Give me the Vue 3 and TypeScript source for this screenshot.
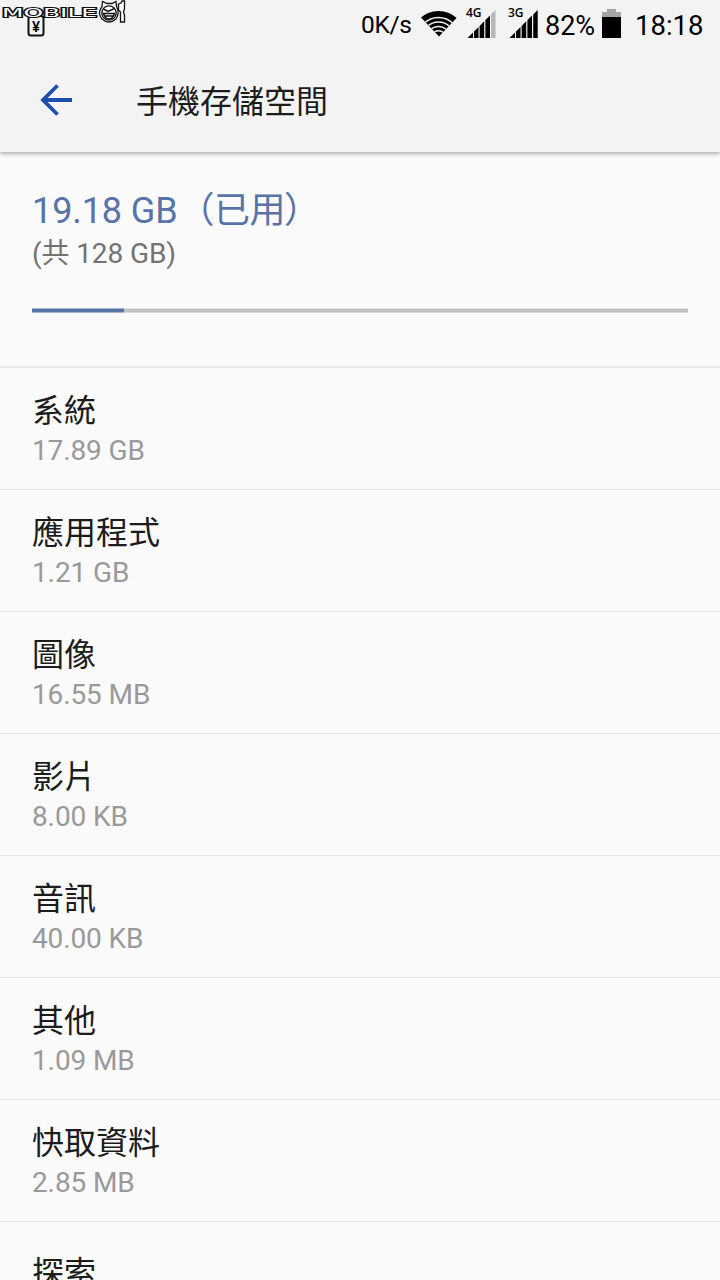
<script setup lang="ts">
interface Category {
  name: string
  size: string
}

const usedPercent = 14.02
const categories: Category[] = [
  { name: '系統', size: '17.89 GB' },
  { name: '應用程式', size: '1.21 GB' },
  { name: '圖像', size: '16.55 MB' },
  { name: '影片', size: '8.00 KB' },
  { name: '音訊', size: '40.00 KB' },
  { name: '其他', size: '1.09 MB' },
  { name: '快取資料', size: '2.85 MB' },
]
</script>

<template>
  <div class="screen">
    <header class="top">
      <div class="status">
        <svg class="note" width="20" height="24" viewBox="0 0 20 24">
          <rect x="2.5" y="2" width="15" height="19.5" rx="2.5" fill="none" stroke="#111" stroke-width="2" />
          <text x="10" y="18" text-anchor="middle" class="yen">¥</text>
        </svg>
        <span class="speed">0K/s</span>
        <svg class="wifi" width="36" height="28" viewBox="0 0 36 28">
          <defs>
            <clipPath id="wedge"><path d="M0 7.5V0H36V7.5L18 26.5Z" /></clipPath>
          </defs>
          <g clip-path="url(#wedge)">
            <circle cx="17.5" cy="28" r="27" fill="#000" />
            <g fill="none" stroke="#f3f3f3" stroke-width="1.4">
              <circle cx="17.5" cy="28" r="20.5" />
              <circle cx="17.5" cy="28" r="16" />
              <circle cx="17.5" cy="28" r="11.5" />
              <circle cx="17.5" cy="28" r="7.3" />
            </g>
          </g>
        </svg>
        <div class="signal first">
          <span class="gen">4G</span>
          <svg width="30" height="29" viewBox="0 0 30 29">
            <path d="M0.5 28L6 22.5V28ZM7 28V21.5L11.5 17V28ZM12.6 28V15.9L17.2 11.3V28ZM18.4 28V10.1L23 5.5V28Z" fill="#000" />
            <path d="M24 28V4.5L28.5 0V28Z" fill="#b8b8b8" />
          </svg>
        </div>
        <div class="signal second">
          <span class="gen">3G</span>
          <svg width="30" height="29" viewBox="0 0 30 29">
            <path d="M0.5 28L6 22.5V28ZM7 28V21.5L11.5 17V28ZM12.6 28V15.9L17.2 11.3V28ZM18.4 28V10.1L23 5.5V28ZM24.2 28V4.5L28.7 0V28Z" fill="#000" />
          </svg>
        </div>
        <span class="percent">82%</span>
        <svg class="battery" width="19" height="29" viewBox="0 0 19 29">
          <path d="M5 0H14V3H19V8H0V3H5Z" fill="#a5a5a5" />
          <path d="M0 8H19V29H0Z" fill="#000" />
        </svg>
        <span class="clock">18:18</span>
      </div>
      <div class="bar">
        <svg class="back" width="34" height="34" viewBox="0 0 34 34">
          <path d="M18.5 2.5L4 17L18.5 31.5M3.5 17H33" fill="none" stroke="#1d4fae" stroke-width="3.8" />
        </svg>
        <h1>手機存儲空間</h1>
      </div>
      <svg class="watermark" width="128" height="26" viewBox="0 0 128 26">
        <text x="2" y="17" textLength="95" lengthAdjust="spacingAndGlyphs" class="brand">MOBILE</text>
        <g stroke="#111" stroke-width="1.3" fill="#fff">
          <path d="M102 6.5L102.5 1.5L107 3.5H112L116 1.5L116.5 6.5Q120 13 116 19Q109 25 102 19Q97 13 102 6.5Z" />
          <circle cx="109" cy="13" r="7.2" />
          <path d="M103.5 9L108 11.5L114.5 8.5M103.5 13.5H114.5Q113 19 109 19Q105 19 103.5 13.5ZM105 16H113" fill="none" stroke-width="1.5" />
          <path d="M118.5 4L121 3L122 1H124.5V9L123.5 12L124.5 15V22H120.5V12L118.5 10Z" />
        </g>
      </svg>
    </header>

    <section class="summary">
      <div class="used">19.18 GB<span class="cjk"><span class="open">（</span>已用<span class="close">）</span></span></div>
      <div class="total">(共 128 GB)</div>
      <div class="track"><div class="fill" :style="{ width: usedPercent + '%' }"></div></div>
    </section>

    <ul class="list">
      <li v-for="item in categories" :key="item.name">
        <div class="name">{{ item.name }}</div>
        <div class="size">{{ item.size }}</div>
      </li>
      <li class="explore"><div class="name">探索</div></li>
    </ul>
  </div>
</template>

<style>
body {
  margin: 0;
  background: #fafafa;
}
</style>

<style scoped>
.screen {
  width: 720px;
  height: 1280px;
  overflow: hidden;
  background: #fafafa;
  color: #1c1c1c;
  font-family: Roboto, "Noto Sans CJK TC", sans-serif;
}
.top {
  position: relative;
  height: 152px;
  background: #f3f3f3;
  box-shadow: 0 1px 5px rgba(0, 0, 0, 0.42);
}
.status {
  display: flex;
  height: 50px;
  color: #000;
}
.status svg {
  display: block;
  flex: none;
}
.note {
  margin: 14px 0 0 26px;
}
.yen {
  font: 500 15px Roboto, sans-serif;
}
.speed {
  width: 60px;
  margin-left: 315px;
  font-size: 24.5px;
  line-height: 50px;
  letter-spacing: -0.3px;
}
.wifi {
  margin-top: 10px;
}
.signal {
  position: relative;
  width: 30px;
  padding-top: 10px;
}
.first {
  margin-left: 10px;
}
.second {
  margin-left: 12px;
}
.gen {
  position: absolute;
  left: -1px;
  top: 5px;
  font: 600 12px/16px "Open Sans", sans-serif;
}
.percent {
  width: 57px;
  margin-left: 6px;
  font-size: 27px;
  line-height: 52px;
}
.battery {
  margin-top: 9px;
}
.clock {
  margin-left: 14px;
  font-size: 27.5px;
  line-height: 52px;
}
.bar {
  display: flex;
  align-items: center;
  height: 100px;
  padding-left: 39px;
}
.back {
  display: block;
}
h1 {
  margin: 4px 0 0 63px;
  font-size: 32px;
  font-weight: 400;
  line-height: 48px;
}
.watermark {
  position: absolute;
  left: 0;
  top: 0;
}
.brand {
  font: 400 12.5px "DejaVu Sans", sans-serif;
  fill: #fff;
  stroke: #111;
  stroke-width: 2px;
  paint-order: stroke;
}
.summary {
  height: 214px;
  box-sizing: border-box;
  padding: 35px 32px 0;
}
.used {
  height: 48px;
  color: #5873a8;
  font-size: 36px;
  line-height: 48px;
  letter-spacing: -0.1px;
  white-space: nowrap;
}
.cjk {
  font-family: "Noto Sans CJK SC", sans-serif;
  letter-spacing: -0.5px;
  line-height: 0;
}
.open {
  margin-left: 1px;
}
.close {
  margin-left: -1px;
}
.total {
  height: 38px;
  color: #737373;
  font-size: 28px;
  line-height: 38px;
  letter-spacing: -0.1px;
}
.track {
  height: 5px;
  margin-top: 35px;
  background: linear-gradient(#dedede 1px, #c0c0c0 1px 4px, #dedede 4px);
}
.fill {
  height: 100%;
  background: linear-gradient(#a5b3cf 1px, #5873a8 1px 4px, #a5b3cf 4px);
}
.list {
  margin: 0;
  padding: 0;
  list-style: none;
}
li {
  height: 122px;
  box-sizing: border-box;
  padding: 21px 32px 0;
  border-top: 1px solid #e4e4e4;
}
li:first-child {
  height: 123px;
  border-top: 2px solid #e9e9e9;
}
.name {
  height: 44px;
  font-size: 32px;
  line-height: 44px;
}
.size {
  height: 36px;
  color: #999;
  font-size: 28px;
  line-height: 36px;
  letter-spacing: -0.12px;
}
.explore {
  padding-top: 29px;
}
</style>
